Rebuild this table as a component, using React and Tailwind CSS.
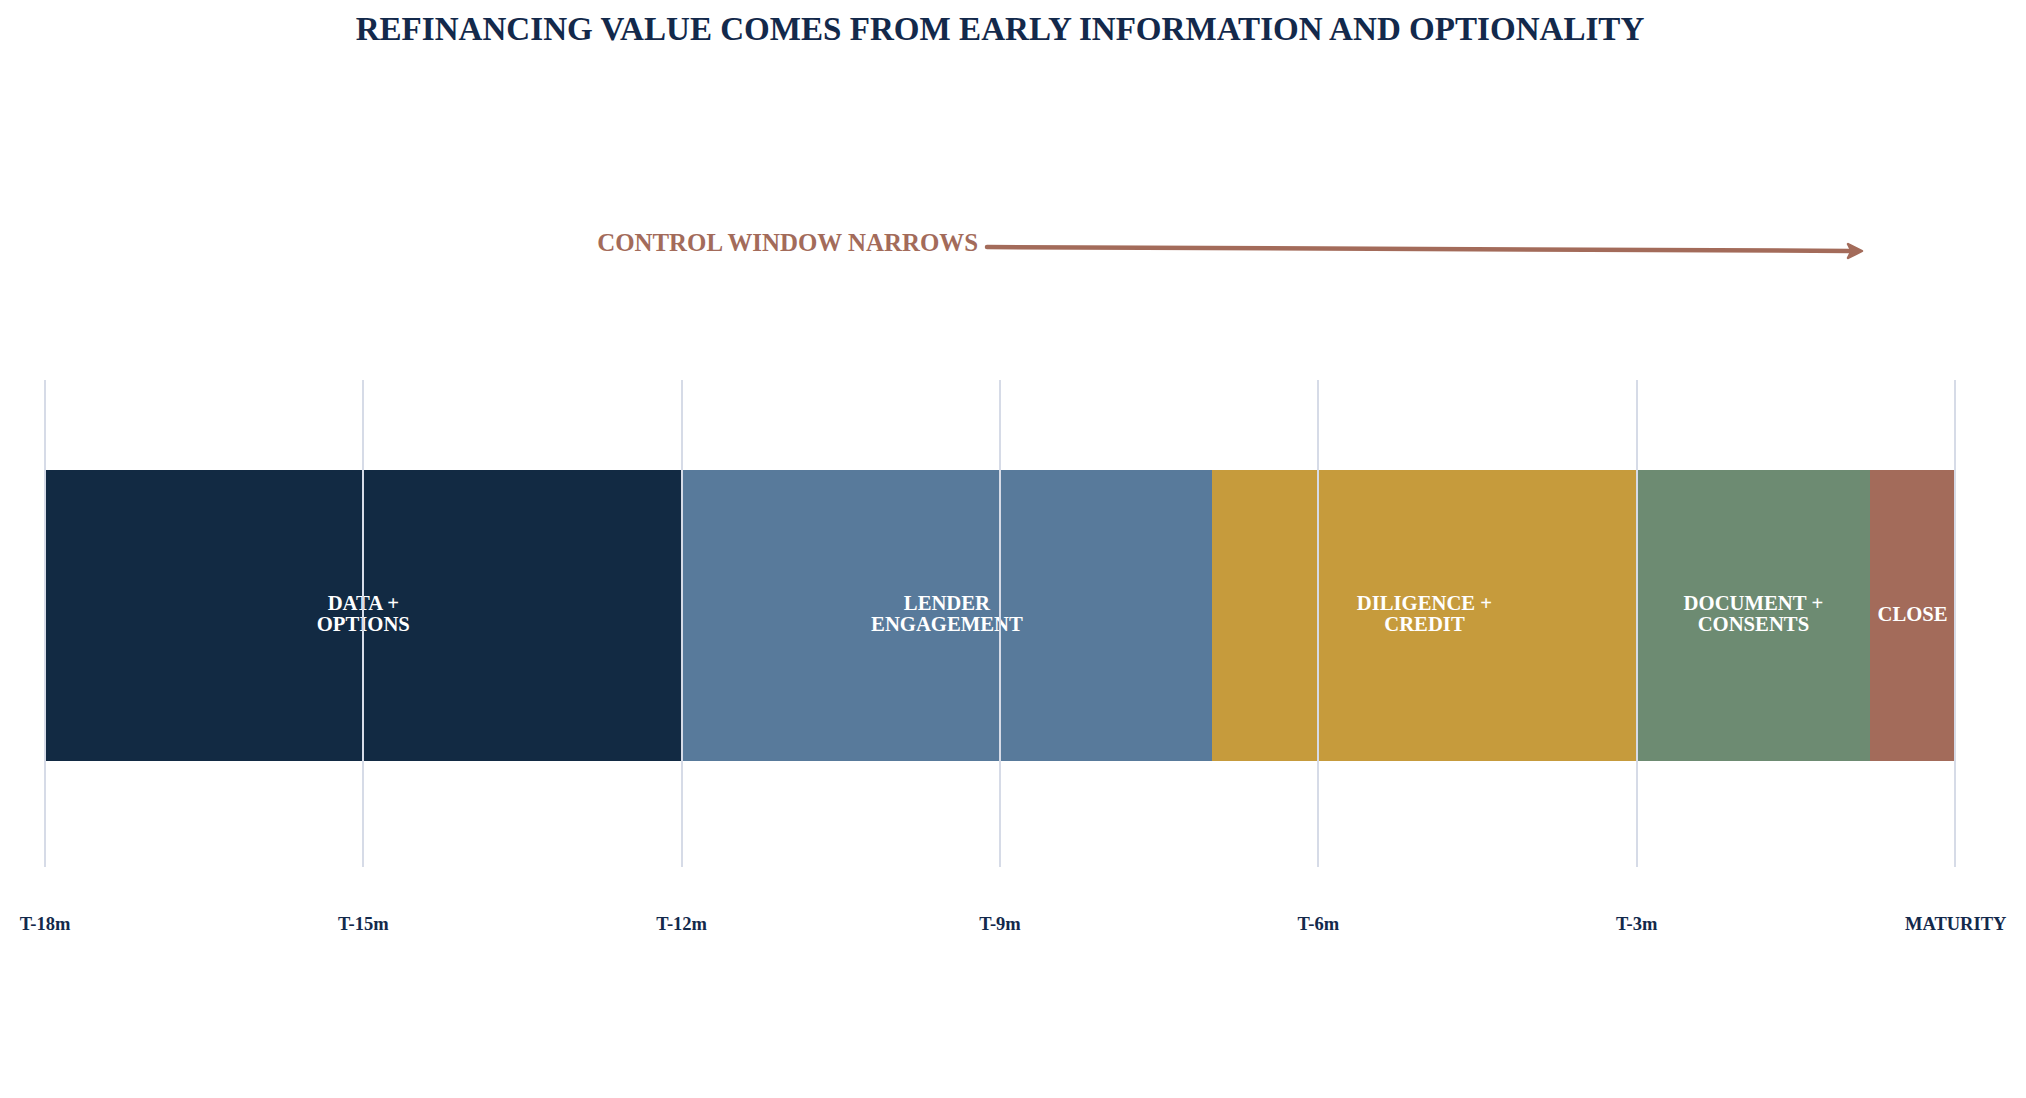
import React from 'react';

const phases = [
  { label: ['DATA +', 'OPTIONS'], grow: 'flex-[6]', color: 'bg-[#122a43]' },
  { label: ['LENDER', 'ENGAGEMENT'], grow: 'flex-[5]', color: 'bg-[#587a9b]' },
  { label: ['DILIGENCE +', 'CREDIT'], grow: 'flex-[4]', color: 'bg-[#c69b3c]' },
  { label: ['DOCUMENT +', 'CONSENTS'], grow: 'flex-[2.2]', color: 'bg-[#6d8b72]' },
  { label: ['CLOSE'], grow: 'flex-[0.8]', color: 'bg-[#a36b5a]' },
];

const ticks = ['T-18m', 'T-15m', 'T-12m', 'T-9m', 'T-6m', 'T-3m', 'MATURITY'];

function Arrow() {
  return (
    <svg width="900" height="32" viewBox="0 0 900 32" className="block">
      <path d="M9 16 L872 19.9" stroke="#a36b5a" strokeWidth="4.5" strokeLinecap="round" fill="none" />
      <path d="M870 13 L884 20 L870 27 L873.5 20 Z" fill="#a36b5a" stroke="#a36b5a" strokeWidth="2.5" strokeLinejoin="round" />
    </svg>
  );
}

export default function App() {
  return (
    <div className="w-[2026px] h-[1098px] bg-white overflow-hidden font-['Liberation_Serif',serif] font-bold">
      <h1 className="w-[2000px] pt-[13px] text-center text-[33.1px] leading-none text-[#13294b] whitespace-nowrap">
        REFINANCING VALUE COMES FROM EARLY INFORMATION AND OPTIONALITY
      </h1>

      <div className="mt-[185px] h-[32px] flex items-start">
        <div className="w-[978px] flex justify-end text-[24.9px] leading-none text-[#a36b5a] whitespace-nowrap">
          CONTROL WINDOW NARROWS
        </div>
        <Arrow />
      </div>

      <div className="relative mt-[117px] ml-[44px] w-[1912px] h-[487px] pt-[90px]">
        <div className="mx-[1px] h-[291px] flex">
          {phases.map((p) => (
            <div key={p.label.join(' ')} className={`${p.grow} ${p.color} flex items-center justify-center text-center text-white text-[20.7px] leading-[21px] pb-[3px]`}>
              <div>
                {p.label.map((l) => (
                  <div key={l} className="whitespace-nowrap">{l}</div>
                ))}
              </div>
            </div>
          ))}
        </div>
        <div className="absolute inset-0 flex justify-between pointer-events-none">
          {ticks.map((t) => (
            <div key={t} className="w-[2px] h-full bg-[#d6dbe7]" />
          ))}
        </div>
      </div>

      <div className="mt-[48px] ml-[-5px] w-[2010px] flex justify-between">
        {ticks.map((t) => (
          <div key={t} className="w-[100px] text-center text-[18.5px] leading-none text-[#13294b]">{t}</div>
        ))}
      </div>
    </div>
  );
}
